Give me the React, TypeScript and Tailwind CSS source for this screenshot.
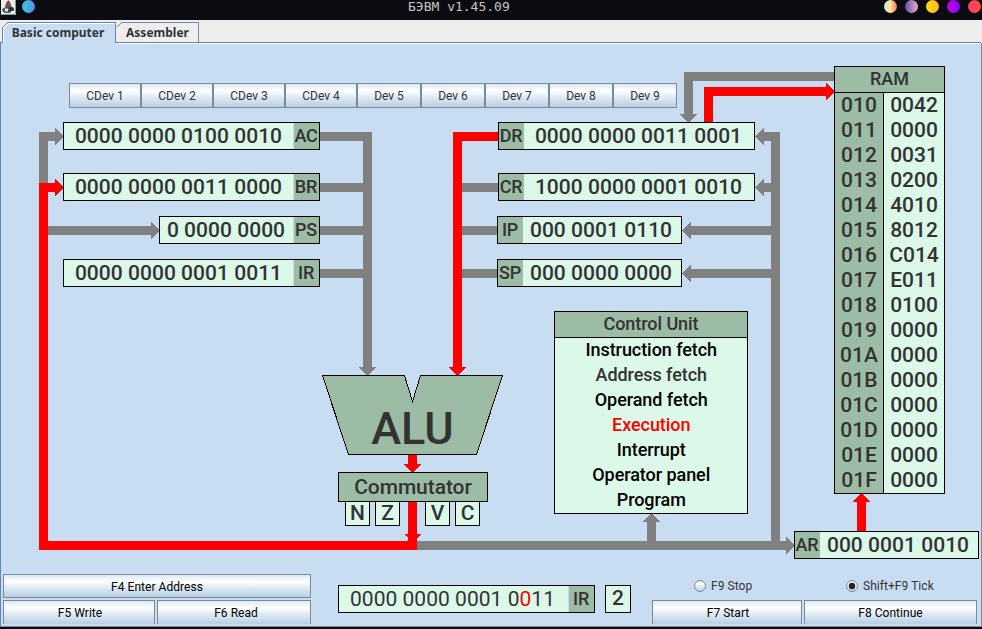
import type { ReactNode } from "react";

const GRADIENT =
  "bg-[linear-gradient(to_bottom,#dde8f3_0%,#ffffff_30%,#dde8f3_60%,#b8cfe5_100%)]";

const deviceButtons = [
  { label: "CDev 1", width: "w-[72px]" },
  { label: "CDev 2", width: "w-[72px]" },
  { label: "CDev 3", width: "w-[72px]" },
  { label: "CDev 4", width: "w-[72px]" },
  { label: "Dev 5", width: "w-16" },
  { label: "Dev 6", width: "w-16" },
  { label: "Dev 7", width: "w-16" },
  { label: "Dev 8", width: "w-16" },
  { label: "Dev 9", width: "w-16" },
];

const memory = [
  ["010", "0042"],
  ["011", "0000"],
  ["012", "0031"],
  ["013", "0200"],
  ["014", "4010"],
  ["015", "8012"],
  ["016", "C014"],
  ["017", "E011"],
  ["018", "0100"],
  ["019", "0000"],
  ["01A", "0000"],
  ["01B", "0000"],
  ["01C", "0000"],
  ["01D", "0000"],
  ["01E", "0000"],
  ["01F", "0000"],
];

const cycles = [
  { name: "Instruction fetch", tone: "text-black" },
  { name: "Address fetch", tone: "text-[#333333]" },
  { name: "Operand fetch", tone: "text-black" },
  { name: "Execution", tone: "text-[#ff0000]" },
  { name: "Interrupt", tone: "text-black" },
  { name: "Operator panel", tone: "text-black" },
  { name: "Program", tone: "text-black" },
];

function Register({
  name,
  value,
  place,
  labelFirst = false,
  inset = "pr-[2px]",
}: {
  name: string;
  value: ReactNode;
  place: string;
  labelFirst?: boolean;
  inset?: string;
}) {
  const label = (
    <div className="flex h-full w-[25px] shrink-0 items-center justify-center bg-[#9dbca5] pr-px text-[18px] font-medium tracking-[-0.2px]">
      {name}
    </div>
  );
  return (
    <div className={`flex h-7 items-center border border-black bg-[#dbf8e9] text-[21px] leading-none text-[#333333] ${place}`}>
      {labelFirst && label}
      <div className={`flex-1 text-center whitespace-nowrap tracking-[0.03px] ${inset}`}>{value}</div>
      {!labelFirst && <div className="h-full w-px bg-[#c8ddf2]" />}
      {!labelFirst && label}
    </div>
  );
}

function Wires() {
  return (
    <svg className="absolute left-0 top-0" width="982" height="531" viewBox="0 43 982 531" shapeRendering="crispEdges">
      <g fill="#808080">
        {/* commutator to AC and PS */}
        <path d="M39 190V132H55V128L64 136.5L55 145V141H48V190Z" />
        <path d="M48 226H151V222L160 230.5L151 239V235H48Z" />
        {/* left operand bus */}
        <path d="M320 132H372V367H376L367.5 376L359 367H363V278H320V269H363V235H320V226H363V192H320V183H363V141H320Z" />
        {/* right operand bus stubs */}
        <path d="M462 183H498V192H462ZM462 226H497V235H462ZM462 269H497V278H462Z" />
        {/* memory read */}
        <path d="M834 72H684V114H680L688.5 123L697 114H693V81H834Z" />
        {/* result bus */}
        <path d="M417 541H647V522H643L651.5 513L660 522H656V541H771V278H691V282L682 273.5L691 265V269H771V235H691V239L682 230.5L691 222V226H771V192H764V196L755 187.5L764 179V183H771V141H764V145L755 136.5L764 128V132H780V541H786V537L795 545.5L786 554V550H417Z" />
      </g>
      <g fill="#ff0000">
        <path d="M39 183H55V179L64 187.5L55 196V192H48V541H408V534H404L421 534H417V550H39Z" />
        <path d="M408 502H417V534H421L413 542H412L404 534H408Z" />
        <path d="M498 132H453V367H449L457.5 376L466 367H462V141H498Z" />
        <path d="M704 122V87H826V83L835 91.5L826 100V96H713V122Z" />
        <path d="M857 531V502H853L861.5 493L870 502H866V531Z" />
        <path d="M408 455H417V464H421L412.5 473L404 464H408Z" />
      </g>
      <path
        d="M322.5 375.5H404.5L412.5 401.5L420.5 375.5H502.5L476.5 454.5H348.5Z"
        fill="#9dbca5"
        stroke="#000000"
      />
    </svg>
  );
}

function Flag({ name, place }: { name: string; place: string }) {
  return (
    <div className={`absolute top-[458px] flex h-[25px] w-[25px] items-center justify-center border border-black bg-[#dbf8e9] text-[21px] leading-none font-medium ${place}`}>
      <span className="-mt-px">{name}</span>
    </div>
  );
}

function DeckButton({ children, size, open = false }: { children: ReactNode; size: string; open?: boolean }) {
  return (
    <button
      className={`flex h-6 items-center justify-center border border-[#7a8a99] text-[12px] leading-none tracking-[0.04px] text-black ${GRADIENT} ${size} ${open ? "border-b-0" : "pt-[2px]"}`}
    >
      {children}
    </button>
  );
}

function Radio({ label, checked = false }: { label: string; checked?: boolean }) {
  return (
    <label className="flex items-center gap-[5px] text-[12px] leading-none tracking-[0.05px] text-[#333333]">
      <svg width="12" height="12" viewBox="0 0 12 12">
        <defs>
          <linearGradient id={checked ? "radio-on" : "radio-off"} x1="0" y1="0" x2="0" y2="1">
            <stop offset="0" stopColor="#dde8f3" />
            <stop offset="0.3" stopColor="#ffffff" />
            <stop offset="0.6" stopColor="#dde8f3" />
            <stop offset="1" stopColor="#b8cfe5" />
          </linearGradient>
        </defs>
        <circle cx="6" cy="6" r="5.5" fill={checked ? "url(#radio-on)" : "url(#radio-off)"} stroke="#7a8a99" />
        {checked && <circle cx="6" cy="6" r="3.2" fill="#222222" />}
      </svg>
      {label}
    </label>
  );
}

function TitleBar() {
  return (
    <header className="grid h-5 grid-cols-[408px_auto_1fr] items-start bg-[#0b0c11]">
      <div className="flex gap-[6px] pl-px">
        <svg width="15" height="15" viewBox="0 0 15 15">
          <rect width="15" height="15" fill="#e8eeee" />
          <path d="M0 14.5H14.5V0" fill="none" stroke="#789baa" />
          <path d="M1 9L4 7.5L5 3L7 1L9.5 3L10 6L13 8V11L10.5 11L9 13H4L2 12Z" fill="#4a5658" />
          <path d="M4 8.5H7V11.5H4Z" fill="#dfe5e5" />
          <path d="M6 1.5L7.5 0.5L9 2Z" fill="#222222" />
          <circle cx="7.6" cy="4.2" r="1.8" fill="#e52920" />
          <path d="M8.5 7L12 8.5L11 10.5L9 11.5Z" fill="#20282b" />
        </svg>
        <div className="h-[13px] w-[13px] rounded-full bg-[linear-gradient(to_right,#36cbd9,#568ce8)]" />
      </div>
      <h1 className="font-['DejaVu_Sans_Mono',monospace] text-[13px] leading-[13px] text-[#c5c8c6]">БЭВМ v1.45.09</h1>
      <div className="flex justify-end gap-2 pr-px">
        <div className="h-[13px] w-[13px] rounded-full bg-[linear-gradient(to_right,#bff5d4,#ffe19b_50%,#ff6b6b)]" />
        <div className="h-[13px] w-[13px] rounded-full bg-[linear-gradient(to_right,#654ea3,#eaafc8)]" />
        <div className="h-[13px] w-[13px] rounded-full bg-[linear-gradient(to_right,#ffe100,#ffb22d)]" />
        <div className="h-[13px] w-[13px] rounded-full bg-[linear-gradient(to_right,#cc00dd,#8500ff)]" />
        <div className="h-[13px] w-[13px] rounded-full bg-[linear-gradient(to_right,#ff416c,#ff4b2b)]" />
      </div>
    </header>
  );
}

function Tabs() {
  return (
    <nav className="relative flex h-[23px] bg-[#eeeeee] font-['Noto_Sans',sans-serif] text-[12px] leading-none font-bold text-[#333333]">
      <svg className="absolute left-0 top-0" width="982" height="24" viewBox="0 0 982 24" shapeRendering="crispEdges">
        <path d="M116.5 7.5L121.5 2.5H198.5V22" fill="none" stroke="#7a8a99" />
        <path d="M116 23.5H981" stroke="#ffffff" />
        <path d="M0.5 24V22.5H2.5V7.5L7.5 2.5H115.5V22.5H981" fill="none" stroke="#6382bf" />
        <path d="M3 24V8L8 3H115V24Z" fill="#c8ddf2" />
        <path d="M3.5 23V8.5L8.5 3.5H115" fill="none" stroke="#ffffff" />
      </svg>
      <span className="relative flex w-[116px] items-center justify-center pt-[3px]">Basic computer</span>
      <span className="relative flex w-[83px] items-center justify-center pt-[3px]">Assembler</span>
    </nav>
  );
}

function Diagram() {
  return (
    <main className="relative h-[531px] shrink-0 font-medium">
      <Wires />
      <div className="absolute left-[69px] top-10 flex">
        {deviceButtons.map((device) => (
          <button
            key={device.label}
            className={`flex h-[25px] items-center justify-center border border-[#7a8a99] text-[12px] leading-none font-normal ${GRADIENT} ${device.width}`}
          >
            {device.label}
          </button>
        ))}
      </div>

      <Register inset="pr-0" name="AC" value="0000 0000 0100 0010" place="absolute left-[63px] top-[79px] w-[257px]" />
      <Register inset="pr-0" name="BR" value="0000 0000 0011 0000" place="absolute left-[63px] top-[130px] w-[257px]" />
      <Register inset="pr-px" name="PS" value="0 0000 0000" place="absolute left-[159px] top-[173px] w-[161px]" />
      <Register inset="pr-0" name="IR" value="0000 0000 0001 0011" place="absolute left-[63px] top-[216px] w-[257px]" />
      <Register labelFirst inset="pr-px" name="DR" value="0000 0000 0011 0001" place="absolute left-[498px] top-[79px] w-[257px]" />
      <Register labelFirst inset="pr-px" name="CR" value="1000 0000 0001 0010" place="absolute left-[498px] top-[130px] w-[257px]" />
      <Register labelFirst name="IP" value="000 0001 0110" place="absolute left-[497px] top-[173px] w-[185px]" />
      <Register labelFirst name="SP" value="000 0000 0000" place="absolute left-[497px] top-[216px] w-[185px]" />
      <Register labelFirst name="AR" value="000 0001 0010" place="absolute left-[794px] top-[488px] w-[185px]" />

      <div className="absolute left-[322px] top-[363px] w-[181px] text-center text-[45px] leading-[46px]">ALU</div>
      <Flag name="N" place="left-[345px]" />
      <Flag name="Z" place="left-[375px]" />
      <Flag name="V" place="left-[425px]" />
      <Flag name="C" place="left-[455px]" />
      <div className="absolute left-[338px] top-[429px] flex h-[30px] w-[150px] items-center justify-center border border-black bg-[#9dbca5] text-[21px] leading-none tracking-[-0.06px]">
        Commutator
      </div>

      <section className="absolute left-[554px] top-[268px] w-[194px] border border-black bg-[#dbf8e9] text-center text-[18px] leading-[23px] tracking-[-0.06px]">
        <h2 className="h-[26px] border-b border-black bg-[#9dbca5]">Control Unit</h2>
        {cycles.map((cycle) => (
          <div key={cycle.name} className={`h-[25px] pl-[0.5px] ${cycle.tone}`}>
            {cycle.name}
          </div>
        ))}
      </section>

      <section className="absolute left-[834px] top-[23px] w-[111px] border border-black bg-[#dbf8e9] text-center text-[21px] leading-[25px]">
        <h2 className="h-[26px] border-b border-black bg-[#9dbca5] text-[18px] leading-[23px]">RAM</h2>
        {memory.map(([address, word]) => (
          <div key={address} className="flex h-[25px]">
            <div className="w-[49px] border-r border-black bg-[#9dbca5]">{address}</div>
            <div className="flex-1">{word}</div>
          </div>
        ))}
      </section>
    </main>
  );
}

function ControlDeck() {
  return (
    <footer className="flex h-[52px] shrink-0 items-start pl-[2px]">
      <div className="flex w-[308px] flex-col gap-[2px]">
        <DeckButton size="w-full">F4 Enter Address</DeckButton>
        <div className="flex gap-[2px]">
          <DeckButton open size="w-[152px] pl-[2px]">F5 Write</DeckButton>
          <DeckButton open size="w-[154px] pl-[4px]">F6 Read</DeckButton>
        </div>
      </div>
      <div className="ml-[27px] flex gap-[10px] pt-[11px]">
        <Register
          name="IR"
          value={
            <>
              0000 0000 0001 0<span className="text-[#ff0000]">0</span>11
            </>
          }
          place="w-[257px]"
        />
        <div className="flex h-7 w-[26px] items-center justify-center border border-black bg-[#dbf8e9] pb-[2px] text-[21px] leading-none font-medium">
          2
        </div>
      </div>
      <div className="ml-[21px] flex flex-col">
        <div className="flex h-[26px] items-center pb-[3px]">
          <div className="flex w-[152px] pl-[42px]">
            <Radio label="F9 Stop" />
          </div>
          <div className="flex w-[173px] pl-[42px]">
            <Radio checked label="Shift+F9 Tick" />
          </div>
        </div>
        <div className="flex gap-[2px]">
          <DeckButton open size="w-[150px] pl-[2px]">F7 Start</DeckButton>
          <DeckButton open size="w-[173px]">F8 Continue</DeckButton>
        </div>
      </div>
    </footer>
  );
}

export default function App() {
  return (
    <div className="h-[629px] w-[982px] overflow-hidden bg-[#0b0c11] font-['Roboto',sans-serif] text-[#333333]">
      <TitleBar />
      <Tabs />
      <div className="flex h-[584px] flex-col border-r border-b border-l border-[#7a8a99] border-l-[#6382bf] bg-[#c8ddf2]">
        <div className="-ml-px">
          <Diagram />
        </div>
        <ControlDeck />
      </div>
    </div>
  );
}
